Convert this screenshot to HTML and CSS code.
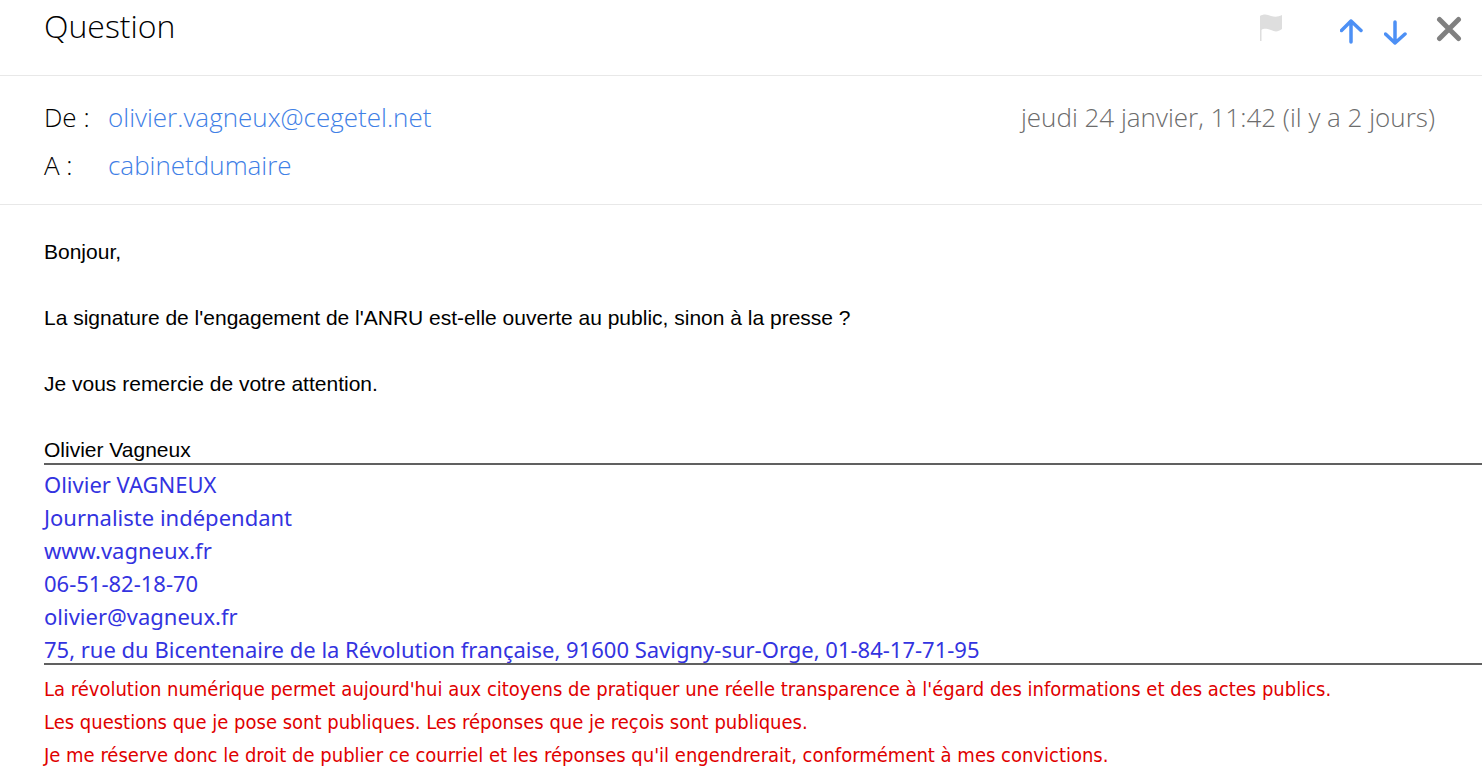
FILE: index.html
```html
<!DOCTYPE html>
<html lang="fr">
<head>
  <meta charset="UTF-8">
  <meta name="viewport" content="width=device-width, initial-scale=1.0">
  <title>Question</title>
  <link rel="stylesheet" href="styles.css">
</head>
<body>
  <header class="toolbar">
    <h1>Question</h1>
    <div class="actions">
      <button class="flag" type="button" aria-label="Marquer">
        <svg width="24" height="28" viewBox="0 0 24 28">
          <path fill="#dedede" d="M0 2C3 0 7 0 11 2c4 1 7 1 11-1v14c-4 3-7 3-11 1-4-1-7-2-9.500 0v11H0z"/>
        </svg>
      </button>
      <button class="previous" type="button" aria-label="Message précédent">
        <svg width="24" height="28" viewBox="0 0 24 28" fill="none" stroke="#4d90f5" stroke-width="3.500" stroke-linecap="round" stroke-linejoin="round">
          <path d="M11 24V3M1.500 12.500L11 3l10 9.500"/>
        </svg>
      </button>
      <button class="next" type="button" aria-label="Message suivant">
        <svg width="24" height="28" viewBox="0 0 24 28" fill="none" stroke="#4d90f5" stroke-width="3.500" stroke-linecap="round" stroke-linejoin="round">
          <path d="M11 4v21M1.500 16L11 25l10-9"/>
        </svg>
      </button>
      <button class="close" type="button" aria-label="Fermer">
        <svg width="26" height="26" viewBox="0 0 26 26" fill="none" stroke="#808080" stroke-width="5" stroke-linecap="round">
          <path d="M3.500 3.500l19 19M22.500 3.500l-19 19"/>
        </svg>
      </button>
    </div>
  </header>

  <section class="envelope">
    <dl class="people">
      <dt>De :</dt>
      <dd><a href="mailto:olivier.vagneux@cegetel.net">olivier.vagneux@cegetel.net</a></dd>
      <dt>A :</dt>
      <dd><a href="#">cabinetdumaire</a></dd>
    </dl>
    <time class="date" datetime="2019-01-24T11:42">jeudi 24 janvier, 11:42 (il y a 2 jours)</time>
  </section>

  <main class="message">
    <div class="text">
      <p>Bonjour,</p>
      <p>La signature de l'engagement de l'ANRU est-elle ouverte au public, sinon à la presse ?</p>
      <p>Je vous remercie de votre attention.</p>
      <p>Olivier Vagneux</p>
    </div>

    <div class="signature">
      <p>Olivier VAGNEUX</p>
      <p>Journaliste indépendant</p>
      <p>www.vagneux.fr</p>
      <p>06-51-82-18-70</p>
      <p>olivier@vagneux.fr</p>
      <p>75, rue du Bicentenaire de la Révolution française, 91600 Savigny-sur-Orge, 01-84-17-71-95</p>
    </div>

    <div class="notice">
      <p>La révolution numérique permet aujourd'hui aux citoyens de pratiquer une réelle transparence à l'égard des informations et des actes publics.</p>
      <p>Les questions que je pose sont publiques. Les réponses que je reçois sont publiques.</p>
      <p>Je me réserve donc le droit de publier ce courriel et les réponses qu'il engendrerait, conformément à mes convictions.</p>
    </div>
  </main>
</body>
</html>
```
FILE: styles.css
```css
* {
  box-sizing: border-box;
}
body {
  margin: 0;
  background: #fff;
  color: #000;
  font-family: "Open Sans", "Noto Sans", sans-serif;
  font-weight: 300;
}
h1, p, dl, dd {
  margin: 0;
}
.toolbar {
  display: flex;
  justify-content: space-between;
  align-items: flex-start;
  padding: 6px 20px 25px 44px;
  border-bottom: 1px solid #e8e8e8;
}
.toolbar h1 {
  font-size: 32px;
  line-height: 40px;
  font-weight: 300;
}
.actions {
  display: flex;
  align-items: center;
  gap: 20px;
  padding-top: 8px;
}
.actions button {
  display: flex;
  padding: 0;
  border: 0;
  background: none;
  cursor: pointer;
}
.actions .flag {
  margin: 0 36px 8px 0;
}
.actions .close {
  margin: 0 0 6px 8px;
}
.envelope {
  display: flex;
  justify-content: space-between;
  align-items: flex-start;
  padding: 24px 47px 22px 44px;
  border-bottom: 1px solid #e8e8e8;
  font-size: 26px;
  line-height: 34px;
}
.people {
  display: grid;
  grid-template-columns: 64px auto;
  row-gap: 14px;
}
.people a {
  color: #3f80e6;
  text-decoration: none;
}
.date {
  color: #6c6c6c;
}
.message {
  padding: 34px 0 12px 44px;
  font-weight: 400;
}
.text {
  display: flex;
  flex-direction: column;
  gap: 40px;
  font-family: "Liberation Sans", Arial, sans-serif;
  font-size: 21px;
  line-height: 26px;
}
.signature,
.notice {
  display: flex;
  flex-direction: column;
  gap: 5px;
  border-top: 2px solid #606060;
  line-height: 28px;
}
.signature {
  padding-top: 5px;
  color: #3333e0;
  font-family: Tahoma, "Noto Sans", sans-serif;
  font-size: 22px;
}
.notice {
  padding-top: 10px;
  color: #e00000;
  font-family: Tahoma, "DejaVu Sans Condensed", sans-serif;
  font-size: 20px;
}
```
